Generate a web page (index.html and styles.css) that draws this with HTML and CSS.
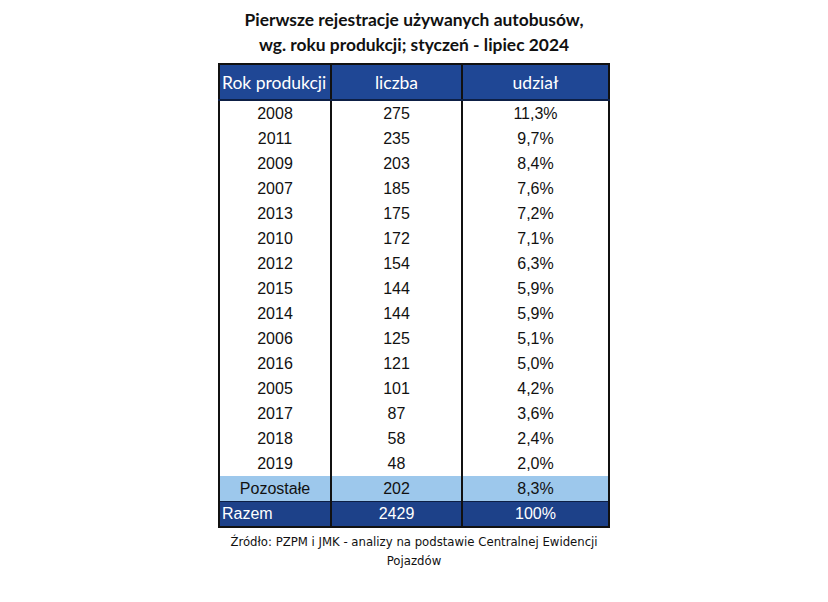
FILE: index.html
```html
<!DOCTYPE html>
<html lang="pl">
<head>
<meta charset="utf-8">
<title>Pierwsze rejestracje używanych autobusów</title>
<link rel="stylesheet" href="styles.css">
</head>
<body>
<div class="page">
  <h1 class="title">Pierwsze rejestracje używanych autobusów,<br>wg. roku produkcji; styczeń - lipiec 2024</h1>
  <table class="data">
    <colgroup><col class="c1"><col class="c2"><col class="c3"></colgroup>
    <thead>
      <tr class="head"><th class="left">Rok produkcji</th><th>liczba</th><th>udział</th></tr>
    </thead>
    <tbody>
      <tr><td>2008</td><td>275</td><td>11,3%</td></tr>
      <tr><td>2011</td><td>235</td><td>9,7%</td></tr>
      <tr><td>2009</td><td>203</td><td>8,4%</td></tr>
      <tr><td>2007</td><td>185</td><td>7,6%</td></tr>
      <tr><td>2013</td><td>175</td><td>7,2%</td></tr>
      <tr><td>2010</td><td>172</td><td>7,1%</td></tr>
      <tr><td>2012</td><td>154</td><td>6,3%</td></tr>
      <tr><td>2015</td><td>144</td><td>5,9%</td></tr>
      <tr><td>2014</td><td>144</td><td>5,9%</td></tr>
      <tr><td>2006</td><td>125</td><td>5,1%</td></tr>
      <tr><td>2016</td><td>121</td><td>5,0%</td></tr>
      <tr><td>2005</td><td>101</td><td>4,2%</td></tr>
      <tr><td>2017</td><td>87</td><td>3,6%</td></tr>
      <tr><td>2018</td><td>58</td><td>2,4%</td></tr>
      <tr><td>2019</td><td>48</td><td>2,0%</td></tr>
      <tr class="other"><td>Pozostałe</td><td>202</td><td>8,3%</td></tr>
      <tr class="total"><td class="left">Razem</td><td>2429</td><td>100%</td></tr>
    </tbody>
  </table>
  <p class="source">Źródło: PZPM i JMK - analizy na podstawie Centralnej Ewidencji<br>Pojazdów</p>
</div>
</body>
</html>
```

FILE: styles.css
```css
html, body {
  margin: 0;
  padding: 0;
  background: #ffffff;
}

.page {
  width: 828px;
  display: flex;
  flex-direction: column;
  align-items: center;
  padding-top: 7px;
}

.title {
  margin: 0 0 6px 0;
  font-family: Lato, "Open Sans", sans-serif;
  font-weight: bold;
  font-size: 17.4px;
  line-height: 25px;
  text-align: center;
  color: #111111;
}

.data {
  border-collapse: collapse;
  width: 390px;
  table-layout: fixed;
  border: 2px solid #111111;
  font-family: "Liberation Sans", Arial, sans-serif;
  font-size: 16px;
  color: #111111;
}

.c1 { width: 112px; }
.c2 { width: 131px; }
.c3 { width: 147px; }

.data th,
.data td {
  padding: 0;
  text-align: center;
  border-left: 2px solid #111111;
  border-right: 2px solid #111111;
}

.head th {
  height: 34px;
  background: #1f4795;
  color: #ffffff;
  font-family: Lato, "Open Sans", sans-serif;
  font-weight: normal;
  font-size: 17.5px;
  border-bottom: 2px solid #0d1f45;
}

.data td {
  height: 25px;
  line-height: 25px;
}

.data .left {
  text-align: left;
  padding-left: 2px;
}

.other td {
  background: #9dc8ec;
}

.total td {
  background: #1d4189;
  color: #ffffff;
  border-top: 1px solid #0d1f45;
  height: 24px;
  line-height: 24px;
}

.source {
  margin: 4px 0 0 0;
  font-family: "DejaVu Sans", Verdana, sans-serif;
  font-stretch: condensed;
  font-size: 13px;
  line-height: 19px;
  text-align: center;
  color: #111111;
}
```
